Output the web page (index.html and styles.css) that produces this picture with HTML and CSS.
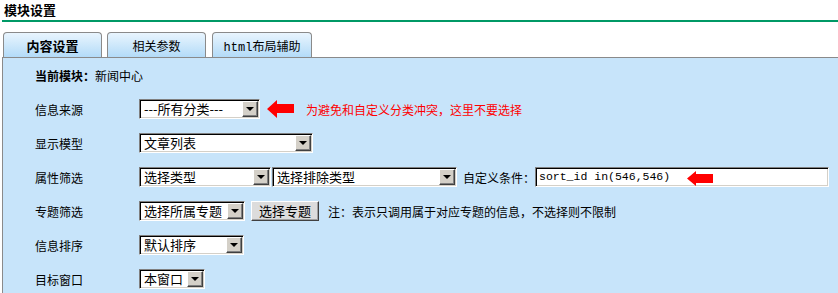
FILE: index.html
```html
<!DOCTYPE html>
<html>
<head>
<meta charset="utf-8">
<link rel="stylesheet" href="styles.css">
</head>
<body>
<div class="title">模块设置</div>
<div class="tabs">
  <div class="tab active">内容设置</div>
  <div class="tab">相关参数</div>
  <div class="tab t3"><span class="mono">html</span>布局辅助</div>
</div>
<div class="panel">
  <div class="row"><div class="cur"><b>当前模块：</b>新闻中心</div></div>
  <div class="row">
    <div class="label">信息来源</div>
    <div class="ctrl">
      <div class="sel w1"><span class="txt">---所有分类---</span><span class="btn"><i></i></span></div>
      <svg class="arrow" width="28" height="18" viewBox="0 0 28 18"><polygon points="0,9 10,0 10,4 27,4 27,13 10,13 10,18" fill="#ff0000"/></svg>
      <span class="warn">为避免和自定义分类冲突，这里不要选择</span>
    </div>
  </div>
  <div class="row">
    <div class="label">显示模型</div>
    <div class="ctrl">
      <div class="sel w2"><span class="txt">文章列表</span><span class="btn"><i></i></span></div>
    </div>
  </div>
  <div class="row">
    <div class="label">属性筛选</div>
    <div class="ctrl">
      <div class="sel w3"><span class="txt">选择类型</span><span class="btn"><i></i></span></div>
      <div class="sel w4 gap2"><span class="txt">选择排除类型</span><span class="btn"><i></i></span></div>
      <span class="cond">自定义条件：</span>
      <div class="inputwrap">
        <div class="input">sort_id in(546,546)</div>
        <svg class="arrow2" width="27" height="15" viewBox="0 0 27 15"><polygon points="0,7.5 9,0 9,3 26,3 26,12 9,12 9,15" fill="#ff0000"/></svg>
      </div>
    </div>
  </div>
  <div class="row">
    <div class="label">专题筛选</div>
    <div class="ctrl">
      <div class="sel w5"><span class="txt">选择所属专题</span><span class="btn"><i></i></span></div>
      <div class="button">选择专题</div>
      <span class="note">注：表示只调用属于对应专题的信息，不选择则不限制</span>
    </div>
  </div>
  <div class="row">
    <div class="label">信息排序</div>
    <div class="ctrl">
      <div class="sel w6"><span class="txt">默认排序</span><span class="btn"><i></i></span></div>
    </div>
  </div>
  <div class="row">
    <div class="label">目标窗口</div>
    <div class="ctrl">
      <div class="sel w7"><span class="txt">本窗口</span><span class="btn"><i></i></span></div>
    </div>
  </div>
</div>
</body>
</html>
```
FILE: styles.css
```css
html, body {
  margin: 0;
  padding: 0;
  background: #ffffff;
}
body {
  font-family: "Noto Sans CJK SC", "DejaVu Sans", sans-serif;
  font-size: 12px;
  color: #000;
  width: 838px;
  height: 293px;
  overflow: hidden;
}
.title {
  margin-left: 2px;
  padding-left: 2px;
  height: 20px;
  line-height: 20px;
  font-size: 13px;
  font-weight: bold;
  border-bottom: 2px solid #009966;
}
.tabs {
  display: flex;
  gap: 5px;
  margin-top: 10px;
  padding-left: 3px;
  height: 25px;
}
.tab {
  box-sizing: border-box;
  width: 99px;
  height: 25px;
  border: 1px solid #8a8a8a;
  border-bottom: none;
  border-radius: 4px 4px 0 0;
  background: linear-gradient(#e9f5fe, #b3dbf8);
  text-align: center;
  line-height: 25px;
  font-size: 12px;
}
.tab.t3 {
  width: 100px;
  margin-left: 1px;
}
.tab.active {
  font-weight: bold;
  font-size: 13px;
}
.mono {
  font-family: "Liberation Mono", monospace;
  font-size: 12px;
}
.panel {
  margin-left: 2px;
  border-left: 1px solid #8a8a8a;
  border-top: 1px solid #8a8a8a;
  background: #c7e4fa;
  height: 240px;
  padding-left: 32px;
}
.row {
  display: flex;
  align-items: center;
  height: 34px;
}
.label {
  width: 104px;
  flex: none;
}
.ctrl {
  display: flex;
  align-items: center;
}
.sel {
  box-sizing: border-box;
  height: 20px;
  display: flex;
  align-items: stretch;
  background: #fff;
  border: 1px solid;
  border-color: #808080 #ffffff #ffffff #808080;
  box-shadow: inset 1px 1px 0 #000, inset -1px -1px 0 #d4d0c8;
  padding: 1px;
  flex: none;
}
.sel .txt {
  flex: 1;
  padding-left: 3px;
  font-size: 13px;
  line-height: 16px;
  white-space: nowrap;
}
.sel .btn {
  box-sizing: border-box;
  width: 16px;
  flex: none;
  background: #d4d0c8;
  border: 1px solid;
  border-color: #ffffff #404040 #404040 #ffffff;
  box-shadow: inset -1px -1px 0 #808080;
  display: flex;
  align-items: center;
  justify-content: center;
}
.sel .btn i {
  width: 0;
  height: 0;
  border-left: 4px solid transparent;
  border-right: 4px solid transparent;
  border-top: 4px solid #000;
}
.w1 { width: 121px; }
.w2 { width: 174px; }
.w3 { width: 132px; }
.w4 { width: 185px; }
.w5 { width: 106px; }
.w6 { width: 105px; }
.w7 { width: 66px; }
.gap2 { margin-left: 1px; }
.arrow {
  margin-left: 7px;
  flex: none;
}
.warn {
  color: #ff0000;
  margin-left: 11px;
}
.cond {
  margin-left: 6px;
}
.inputwrap {
  position: relative;
}
.input {
  box-sizing: border-box;
  width: 294px;
  height: 20px;
  background: #fff;
  border: 1px solid;
  border-color: #808080 #ffffff #ffffff #808080;
  box-shadow: inset 1px 1px 0 #000, inset -1px -1px 0 #d4d0c8;
  font-family: "Liberation Mono", monospace;
  font-size: 11.5px;
  line-height: 18px;
  padding-left: 3px;
}
.arrow2 {
  position: absolute;
  left: 152px;
  top: 4px;
}
.button {
  box-sizing: border-box;
  margin-left: 6px;
  width: 68px;
  height: 20px;
  background: #dcdcdc;
  border: 1px solid;
  border-color: #ffffff #404040 #404040 #ffffff;
  box-shadow: inset -1px -1px 0 #a0a0a0;
  text-align: center;
  font-size: 13px;
  line-height: 18px;
}
.note {
  margin-left: 9px;
}
```
